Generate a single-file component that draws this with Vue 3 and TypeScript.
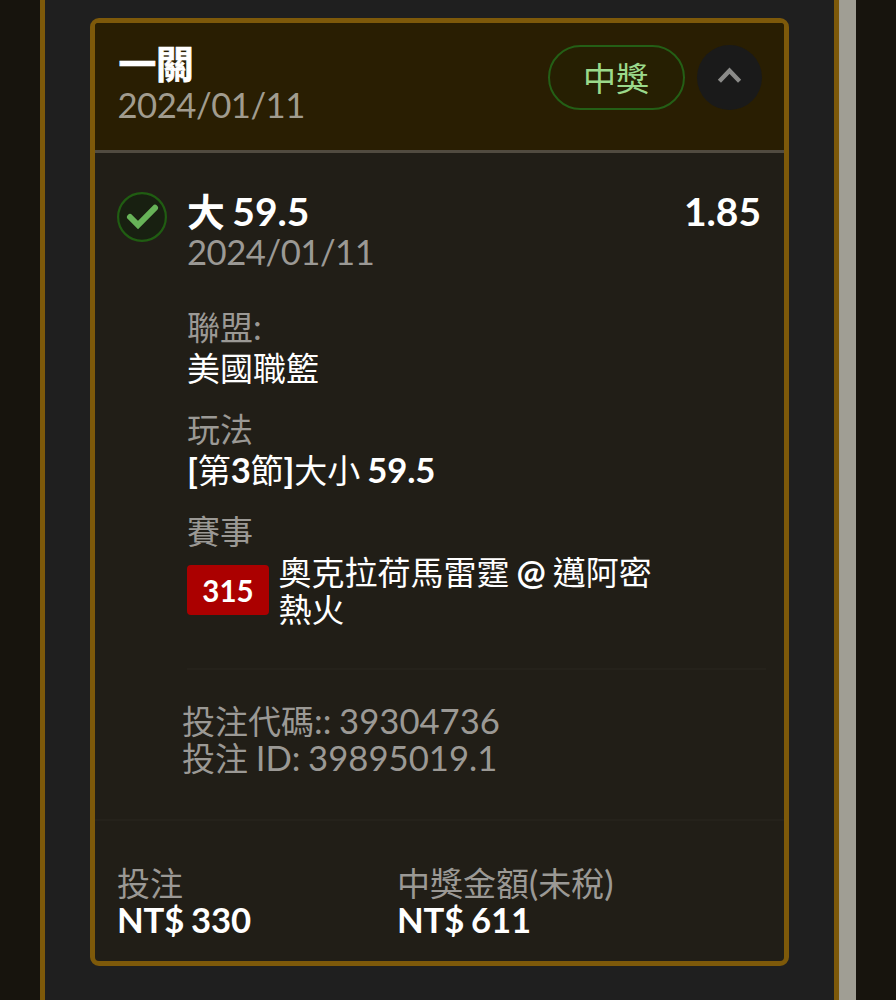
<script setup lang="ts">
import { h, type FunctionalComponent } from 'vue'

// Splits a string into CJK and Latin runs so each script gets its own size and weight.
const MixedText: FunctionalComponent<{ text: string }> = (props) =>
  h(
    'span',
    { class: 'mixed' },
    (props.text.match(/[\u3400-\u9fff]+|[^\u3400-\u9fff]+/g) ?? []).map((part) =>
      h('span', { class: /[\u3400-\u9fff]/.test(part) ? 'cjk' : 'latin' }, part),
    ),
  )
MixedText.props = ['text']

interface Detail {
  label: string
  value: string
}

const details: Detail[] = [
  { label: '聯盟:', value: '美國職籃' },
  { label: '玩法', value: '[第3節]大小 59.5' },
]

const amounts: Detail[] = [
  { label: '投注', value: 'NT$ 330' },
  { label: '中獎金額(未稅)', value: 'NT$ 611' },
]

const teams: string[] = ['奧克拉荷馬雷霆 @ 邁阿密', '熱火']
</script>

<template>
  <div class="page">
    <main class="panel">
      <article class="card">
        <header class="head">
          <div class="head-text">
            <h1 class="line large parlay"><MixedText text="一關" /></h1>
            <p class="line date head-date"><MixedText text="2024/01/11" /></p>
          </div>
          <span class="pill">中獎</span>
          <button class="toggle" type="button" aria-label="收合">
            <svg viewBox="0 0 65 65" width="65" height="65">
              <path d="M22.4 36.2 L32.5 25.7 L42.6 36.2" fill="none" stroke="#8b8b89" stroke-width="4.4" />
            </svg>
          </button>
        </header>

        <section class="bet">
          <svg class="check" viewBox="0 0 50 50" width="50" height="50">
            <circle cx="25" cy="25" r="23.9" fill="#182011" stroke="#205d12" stroke-width="2.2" />
            <path d="M13 25 L21 33 L38 15.8" fill="none" stroke="#67b358" stroke-width="6" stroke-linecap="round" />
          </svg>
          <div class="info">
            <div class="title-row">
              <h2 class="line large"><MixedText text="大 59.5" /></h2>
              <span class="line large odds"><MixedText text="1.85" /></span>
            </div>
            <p class="line muted date"><MixedText text="2024/01/11" /></p>

            <div class="details">
              <div v-for="d in details" :key="d.label" class="detail">
                <p class="line muted"><MixedText :text="d.label" /></p>
                <p class="line value"><MixedText :text="d.value" /></p>
              </div>
              <div>
                <p class="line muted"><MixedText text="賽事" /></p>
                <div class="match">
                  <span class="badge">315</span>
                  <div>
                    <p v-for="t in teams" :key="t" class="line team"><MixedText :text="t" /></p>
                  </div>
                </div>
              </div>
            </div>

            <div class="codes">
              <p class="line muted"><MixedText text="投注代碼:: 39304736" /></p>
              <p class="line muted"><MixedText text="投注 ID: 39895019.1" /></p>
            </div>
          </div>
        </section>

        <footer class="foot">
          <div v-for="a in amounts" :key="a.label">
            <p class="line muted"><MixedText :text="a.label" /></p>
            <p class="line amount"><MixedText :text="a.value" /></p>
          </div>
        </footer>
      </article>
    </main>
    <div class="scrollbar"></div>
  </div>
</template>

<style>
body {
  background: #17140d;
  overflow: hidden;
}
</style>

<style scoped>
* {
  box-sizing: border-box;
  margin: 0;
}

.page {
  display: flex;
  height: 1000px;
  padding-left: 40px;
  overflow: hidden;
  background: #17140d;
  font-family: Lato, 'Noto Sans CJK TC', sans-serif;
}

.panel {
  width: 799px;
  padding: 18px 45px 0;
  border: solid #7d590a;
  border-width: 0 5px;
  background: #1f1f1f;
}

.scrollbar {
  width: 17px;
  background: #a09e94;
}

.card {
  width: 699px;
  height: 948px;
  border: 5px solid #7d590a;
  border-radius: 9px;
  background: #211e17;
}

.line {
  height: 37px;
  font-size: 34.7px;
  font-weight: 400;
  line-height: 37px;
  white-space: pre;
  word-spacing: -1.2px;
  color: #fff;
}

.line :deep(.cjk) {
  font-family: 'Noto Sans CJK TC', sans-serif;
  font-size: 33px;
  line-height: 0;
}

.line.large {
  font-size: 39px;
  font-weight: 700;
  word-spacing: -2px;
}

.large :deep(.cjk) {
  font-size: 37.8px;
}

.parlay :deep(.cjk) {
  margin-left: 1px;
  letter-spacing: -0.3px;
  -webkit-text-stroke: 0.7px #fff;
}

.odds {
  margin-right: 1px;
}

.muted {
  color: #9b9995;
}

.date {
  letter-spacing: -0.5px;
}

.head-date {
  color: #a19c8f;
}

.head {
  display: flex;
  height: 130px;
  padding: 22px 22.5px 0 22.5px;
  border-bottom: 3px solid #514b40;
  border-radius: 3px 3px 0 0;
  background: #291e02;
}

.head-text {
  display: grid;
  flex: 1;
  align-content: start;
  row-gap: 4px;
}

.pill {
  display: flex;
  align-items: center;
  justify-content: center;
  width: 137px;
  height: 65px;
  padding-bottom: 2px;
  border: 2.5px solid #245f16;
  border-radius: 33px;
  background: #261f02;
  color: #9bd98b;
  font-family: 'Noto Sans CJK TC', sans-serif;
  font-size: 33px;
  line-height: 58px;
}

.toggle {
  width: 65px;
  height: 65px;
  margin-left: 12px;
  padding: 0;
  border: 0;
  border-radius: 50%;
  background: #1a1a1a;
}

.toggle svg {
  display: block;
}

.bet {
  display: flex;
  height: 668px;
  padding: 39px 22px 0;
  border-bottom: 2px solid #25221b;
}

.check {
  flex: none;
  margin-right: 20px;
}

.info {
  flex: 1;
}

.title-row {
  display: flex;
  justify-content: space-between;
  padding-top: 1px;
  margin-bottom: 3px;
}

.details {
  height: 400px;
  padding-top: 37.5px;
  margin-right: -4px;
  border-bottom: 2px solid #25221b;
}

.detail {
  margin-bottom: 24px;
}

.detail .value {
  margin-top: 4px;
}

.value :deep(.latin),
.team :deep(.latin),
.amount :deep(.latin) {
  font-weight: 700;
  letter-spacing: -0.2px;
}

.amount {
  word-spacing: -1.2px;
}

.match {
  display: flex;
  gap: 9.5px;
  margin-top: 4.5px;
}

.badge {
  display: flex;
  align-items: center;
  justify-content: center;
  width: 82px;
  height: 50px;
  margin-top: 12px;
  border-radius: 4px;
  background: #ab0000;
  color: #fff;
  font-size: 29.5px;
  font-weight: 700;
}

.codes {
  margin: 32px 0 0 -5px;
}

.foot {
  display: grid;
  grid-template-columns: 280px 1fr;
  padding: 43px 22px 0;
}
</style>
